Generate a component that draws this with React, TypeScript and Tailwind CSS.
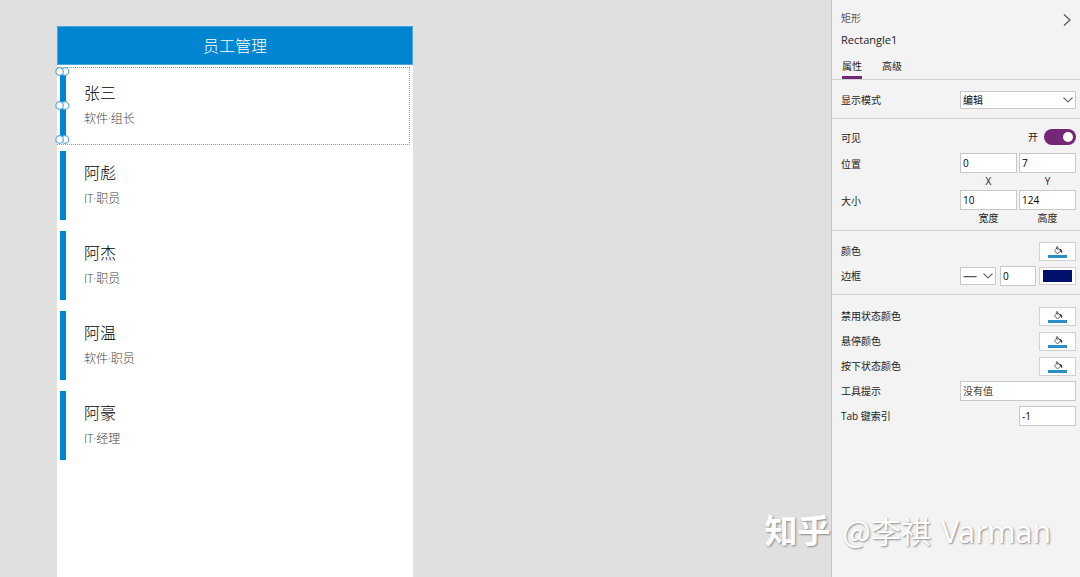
import { useState, type ReactNode } from "react";

interface Employee {
  name: string;
  role: string;
}

const employees: Employee[] = [
  { name: "张三", role: "软件·组长" },
  { name: "阿彪", role: "IT·职员" },
  { name: "阿杰", role: "IT·职员" },
  { name: "阿温", role: "软件·职员" },
  { name: "阿豪", role: "IT·经理" },
];

const inputClass =
  "h-5 min-w-0 border border-[#c8c8c8] bg-white px-[2px] text-[10px] text-black placeholder:text-[#444] outline-none";

export default function App() {
  return (
    <div className="relative flex h-screen overflow-hidden bg-[#e0e0e0] font-['Open_Sans','Noto_Sans_CJK_SC',sans-serif]">
      <main className="flex min-w-0 flex-1 pt-[26px] pl-[57px]">
        <PhonePreview />
      </main>
      <PropertiesPanel />
      <Watermark />
    </div>
  );
}

function PhonePreview() {
  return (
    <section className="flex w-[356px] flex-col bg-white">
      <h1 className="h-[39px] border border-[#4ba6dc] bg-[#0086d1] text-center text-base leading-[39px] font-light text-white">
        员工管理
      </h1>
      <ul>
        {employees.map((employee, index) => (
          <EmployeeRow key={employee.name} employee={employee} selected={index === 0} />
        ))}
      </ul>
    </section>
  );
}

function EmployeeRow({ employee, selected }: { employee: Employee; selected: boolean }) {
  return (
    <li className="relative flex h-20 pt-[6px] pl-[3px]">
      {selected && <div className="absolute top-[2px] right-[3px] bottom-0 left-0 border border-l-0 border-dotted border-[#4fb0ee]" />}
      <div className="relative h-[69px] w-[6px] bg-[#0086d1]">
        {selected && (
          <div className="absolute -inset-y-1 -left-[5px] flex flex-col justify-between">
            <Handles />
            <Handles />
            <Handles />
          </div>
        )}
      </div>
      <div className="pt-[10px] pl-[18px]">
        <p className="text-base leading-6 font-light text-black">{employee.name}</p>
        <p className="mt-[5px] text-xs leading-[18px] font-light text-[#444]">{employee.role}</p>
      </div>
    </li>
  );
}

function Handles() {
  return (
    <svg className="h-[9px] w-[15px]" viewBox="0 0 15 9" fill="#fff" stroke="#5fa9db" strokeWidth="1.2">
      <circle cx="10" cy="4.5" r="3.8" />
      <circle cx="4.6" cy="4.5" r="3.8" />
    </svg>
  );
}

function PropertiesPanel() {
  const [tab, setTab] = useState("属性");
  const [visible, setVisible] = useState(true);

  return (
    <aside className="w-[249px] shrink-0 border-l border-[#c4c4c4] bg-[#f3f3f3] text-[10px] text-[#222]">
      <header className="border-b border-[#d0d0d0] pt-[9px] pr-1 pl-[9px]">
        <div className="flex h-[18px] items-center justify-between">
          <span className="text-[#555]">矩形</span>
          <button type="button" aria-label="折叠" className="mt-1 mr-1">
            <svg className="h-3 w-[10px]" viewBox="0 0 10 12" fill="none" stroke="#555" strokeWidth="1.2">
              <path d="M2 0.5L8 6L2 11.5" />
            </svg>
          </button>
        </div>
        <h2 className="mt-1 text-[11px] leading-[18px]">Rectangle1</h2>
        <div className="mt-[7px] flex gap-5 pl-px">
          {["属性", "高级"].map((name) => (
            <button
              key={name}
              type="button"
              onClick={() => setTab(name)}
              className={`h-[23px] border-b-[3px] text-[10px] leading-[18px] ${tab === name ? "border-[#742774]" : "border-transparent"}`}
            >
              {name}
            </button>
          ))}
        </div>
      </header>

      <Section className="pt-[11px] pb-[9px]">
        <div className="flex items-center justify-between">
          <label htmlFor="display-mode">显示模式</label>
          <div className="relative">
            <select id="display-mode" className="block h-[18px] w-[116px] appearance-none border border-[#c8c8c8] bg-white px-[2px] text-[10px] leading-4 text-black outline-none">
              <option>编辑</option>
            </select>
            <Chevron className="right-[3px]" />
          </div>
        </div>
      </Section>

      <Section className="pt-[10px] pb-[3px]">
        <div className="flex h-4 items-center">
          <label htmlFor="visible" className="mr-auto pt-[2px]">可见</label>
          <span className="mr-[6px]">{visible ? "开" : "关"}</span>
          <input
            id="visible"
            type="checkbox"
            role="switch"
            checked={visible}
            onChange={(e) => setVisible(e.target.checked)}
            className="h-4 w-8 appearance-none rounded-full bg-[#999] p-[3px] before:block before:size-[10px] before:rounded-full before:bg-white checked:bg-[#742774] checked:before:ml-4"
          />
        </div>
        <PairRow label="位置" fields={[["X", "0"], ["Y", "7"]]} className="mt-2" />
        <PairRow label="大小" fields={[["宽度", "10"], ["高度", "124"]]} />
      </Section>

      <Section className="flex flex-col gap-[5px] pt-[10px] pb-2">
        <ColorRow label="颜色" />
        <div className="flex h-5 items-center">
          <span className="mr-auto">边框</span>
          <div className="relative mr-1">
            <select aria-label="边框样式" className="block h-[18px] w-9 appearance-none border border-[#c8c8c8] bg-white px-[2px] text-sm leading-4 text-[#555] outline-none">
              <option>—</option>
            </select>
            <Chevron className="right-[3px]" />
          </div>
          <input aria-label="边框宽度" defaultValue="0" className={`${inputClass} mr-[3px] w-9`} />
          <button type="button" aria-label="边框颜色" className="h-[18px] w-[37px] border border-[#d0d0d0] bg-white px-[3px] py-[2px]">
            <span className="block h-3 bg-[#00126b]" />
          </button>
        </div>
      </Section>

      <div className="flex flex-col gap-[5px] pt-[11px] pr-1 pl-[9px]">
        <ColorRow label="禁用状态颜色" />
        <ColorRow label="悬停颜色" />
        <ColorRow label="按下状态颜色" />
        <div className="flex h-5 items-center justify-between">
          <label htmlFor="tooltip">工具提示</label>
          <input id="tooltip" placeholder="没有值" className={`${inputClass} w-[116px]`} />
        </div>
        <div className="flex h-5 items-center justify-between">
          <label htmlFor="tab-index">Tab 键索引</label>
          <input id="tab-index" defaultValue="-1" className={`${inputClass} w-[57px]`} />
        </div>
      </div>
    </aside>
  );
}

function Section({ className, children }: { className: string; children: ReactNode }) {
  return <section className={`border-b border-[#d0d0d0] pr-1 pl-[9px] ${className}`}>{children}</section>;
}

function PairRow({ label, fields, className = "" }: { label: string; fields: [string, string][]; className?: string }) {
  return (
    <div className={`flex justify-between ${className}`}>
      <span className="leading-[22px]">{label}</span>
      <div className="flex gap-[2px]">
        {fields.map(([name, value]) => (
          <label key={name} className="flex w-[57px] flex-col-reverse text-center leading-[17px]">
            {name}
            <input defaultValue={value} className={inputClass} />
          </label>
        ))}
      </div>
    </div>
  );
}

function ColorRow({ label }: { label: string }) {
  return (
    <div className="flex h-5 items-center justify-between">
      <span>{label}</span>
      <button type="button" aria-label={label} className="flex h-[19px] w-[37px] flex-col items-center border border-[#d0d0d0] bg-white pt-[3px]">
        <svg className="h-[9px] w-[10px]" viewBox="0 0 10 9" fill="none" stroke="#555" strokeWidth="0.9">
          <path d="M4.6 1.8L7.8 4.8L4.6 8L1.4 4.8Z" />
          <path d="M3.4 3V1.2C3.4 0.3 4.8 0.3 4.8 1.2V3.8" />
          <path d="M6.6 3L8.8 4.2V6.8L7.4 4.8Z" fill="#333" stroke="#333" strokeWidth="0.6" />
        </svg>
        <span className="h-[3px] w-[19px] bg-[#2a8fc6]" />
      </button>
    </div>
  );
}

function Chevron({ className }: { className: string }) {
  return (
    <svg className={`pointer-events-none absolute top-[6px] h-[6px] w-[10px] ${className}`} viewBox="0 0 10 6" fill="none" stroke="#666" strokeWidth="1.1">
      <path d="M0.5 0.5L5 5L9.5 0.5" />
    </svg>
  );
}

function Watermark() {
  return (
    <div className="pointer-events-none absolute right-[29px] bottom-[25px] flex items-baseline gap-3 font-['Noto_Sans','Noto_Sans_CJK_SC',sans-serif] text-[30px] leading-10 whitespace-nowrap text-white [text-shadow:1px_1px_2px_#888]">
      <span className="text-[33px] font-bold">知乎</span>
      <span className="flex items-baseline gap-[10px]">
        <span className="font-['Noto_Sans_CJK_SC',sans-serif]">@李祺</span>
        <span>Varman</span>
      </span>
    </div>
  );
}
